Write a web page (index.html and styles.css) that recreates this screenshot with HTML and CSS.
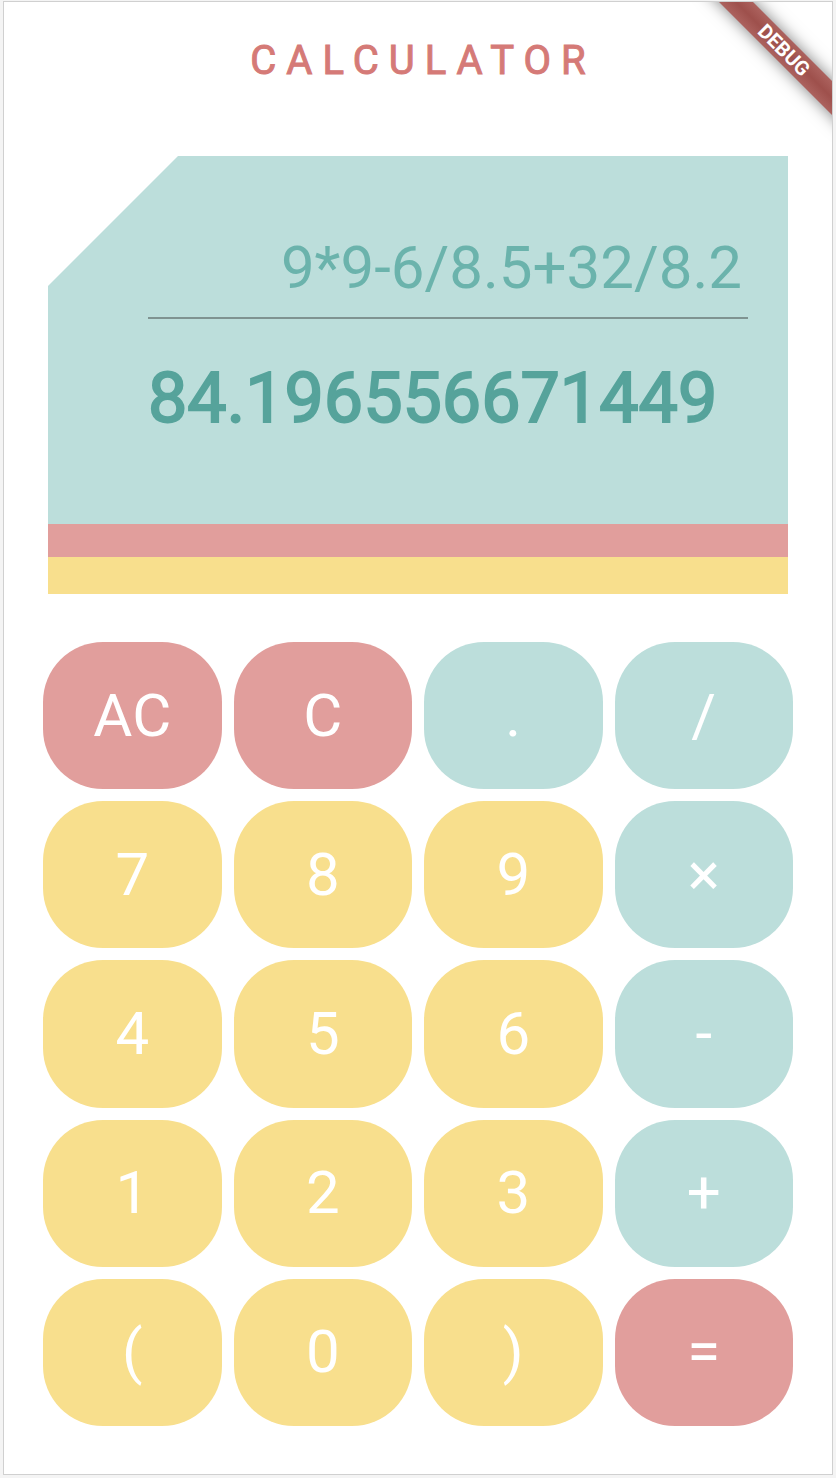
FILE: index.html
```html
<!DOCTYPE html>
<html lang="en">
<head>
<meta charset="utf-8">
<meta name="viewport" content="width=device-width, initial-scale=1">
<title>Calculator</title>
<link rel="stylesheet" href="styles.css">
</head>
<body>
<main class="app">
  <div class="ribbon-corner"><span class="ribbon">DEBUG</span></div>
  <h1 class="title">CALCULATOR</h1>
  <section class="display" aria-label="Display">
    <div class="screen">
      <div class="expression">9*9-6/8.5+32/8.2</div>
      <output class="result">84.196556671449</output>
    </div>
    <div class="stripe stripe-red"></div>
    <div class="stripe stripe-yellow"></div>
  </section>
  <section class="keypad" aria-label="Keypad">
    <button class="key red" type="button">AC</button>
    <button class="key red" type="button">C</button>
    <button class="key teal" type="button">.</button>
    <button class="key teal" type="button">/</button>
    <button class="key" type="button">7</button>
    <button class="key" type="button">8</button>
    <button class="key" type="button">9</button>
    <button class="key teal" type="button">×</button>
    <button class="key" type="button">4</button>
    <button class="key" type="button">5</button>
    <button class="key" type="button">6</button>
    <button class="key teal" type="button">-</button>
    <button class="key" type="button">1</button>
    <button class="key" type="button">2</button>
    <button class="key" type="button">3</button>
    <button class="key teal" type="button">+</button>
    <button class="key" type="button">(</button>
    <button class="key" type="button">0</button>
    <button class="key" type="button">)</button>
    <button class="key red" type="button">=</button>
  </section>
</main>
</body>
</html>
```
FILE: styles.css
```css
:root {
  --teal: #bcdedb;
  --red: #e19e9c;
  --yellow: #f8df8d;
}

* {
  box-sizing: border-box;
}

body {
  margin: 0;
  padding: 1px 3px 3px;
  min-height: 100vh;
  display: flex;
  background: #f4f4f4;
  font-family: Roboto, sans-serif;
}

.app {
  position: relative;
  flex: 1;
  min-width: 0;
  padding: 35px 39px 48px;
  border: 1px solid #d0d0d0;
  background: #fff;
  display: flex;
  flex-direction: column;
}

.title {
  margin: 0;
  padding-left: 10px;
  font-size: 40px;
  line-height: 48px;
  font-weight: 400;
  -webkit-text-stroke: 1px currentColor;
  letter-spacing: 10px;
  text-align: center;
  color: #d57a77;
}

.display {
  margin: 71px 5px 48px;
}

.screen {
  padding: 78px 40px 88px 100px;
  background: var(--teal);
  clip-path: polygon(130px 0, 100% 0, 100% 100%, 0 100%, 0 130px);
}

.expression {
  padding: 0 6px 16px 0;
  border-bottom: 2px solid #7f9391;
  font-size: 60px;
  line-height: 67px;
  text-align: right;
  color: #6bb3ac;
}

.result {
  display: block;
  padding-top: 41px;
  font-size: 70px;
  line-height: 76px;
  font-weight: 400;
  -webkit-text-stroke: 2px currentColor;
  color: #56a39b;
}

.stripe-red {
  height: 33px;
  background: var(--red);
}

.stripe-yellow {
  height: 37px;
  background: var(--yellow);
}

.keypad {
  flex: 1;
  display: grid;
  grid-template-columns: repeat(4, 1fr);
  grid-auto-rows: 1fr;
  gap: 12px;
}

.key {
  padding: 0;
  border: 0;
  border-radius: 60px;
  background: var(--yellow);
  color: #fff;
  font: 400 60px/70px Roboto, sans-serif;
}

.red {
  background: var(--red);
}

.teal {
  background: var(--teal);
}

.ribbon-corner {
  position: absolute;
  top: 0;
  right: 0;
  width: 140px;
  height: 140px;
  overflow: hidden;
}

.ribbon {
  position: absolute;
  top: 36px;
  right: -52px;
  width: 200px;
  transform: rotate(45deg);
  background: linear-gradient(#ac625e, #9e504c 50%, #ac625e);
  box-shadow: 0 0 16px rgba(0, 0, 0, 0.5);
  color: #fff;
  font-size: 20px;
  line-height: 24px;
  font-weight: 700;
  text-align: center;
}
```
